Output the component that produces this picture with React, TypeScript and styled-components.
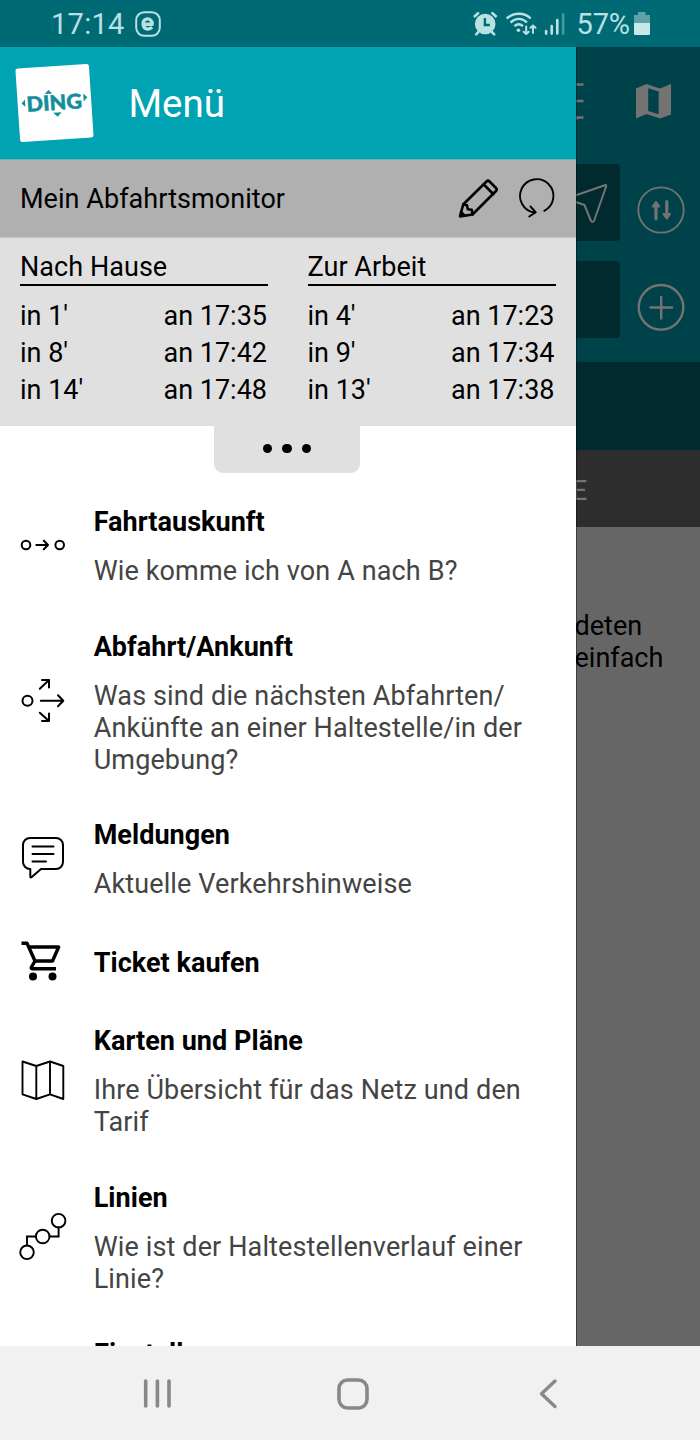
import React from "react";
import styled, { createGlobalStyle } from "styled-components";

const GlobalStyle = createGlobalStyle`
  * { box-sizing: border-box; }
  html, body { margin: 0; padding: 0; }
  body { font-family: Roboto, "Liberation Sans", sans-serif; color: #000; }
  svg { display: block; flex: none; overflow: visible; }
`;

const Phone = styled.div`
  width: 700px;
  height: 1440px;
  display: flex;
  flex-direction: column;
  overflow: hidden;
`;

const StatusBar = styled.header`
  height: 47px;
  flex: none;
  display: flex;
  align-items: center;
  padding: 0 50px 0 51px;
  background: #006a74;
  color: #b9e0e3;
`;

const StatusText = styled.span<{ $gap: number; $spacing?: number }>`
  font-size: 29px;
  line-height: 34px;
  padding-top: 1px;
  letter-spacing: ${(p) => p.$spacing ?? 0}px;
  margin-right: ${(p) => p.$gap}px;
`;

const StatusIcons = styled.div`
  display: flex;
  align-items: center;
  margin-left: auto;
`;

const IconGroup = styled.div`
  display: flex;
  align-items: center;
  gap: 7px;
  margin-right: 10px;
`;

const Stage = styled.main`
  position: relative;
  flex: 1;
  min-height: 0;
  background: #666;
`;

const Backdrop = styled.div`
  display: flex;
  flex-direction: column;
`;

const SearchArea = styled.section`
  height: 315px;
  padding: 0 15px;
  background: #004249;
`;

const AppBar = styled.div`
  height: 109px;
  display: flex;
  align-items: center;
  justify-content: flex-end;
  gap: 51px;
  padding-right: 13px;
`;

const SearchRow = styled.div`
  display: flex;
  align-items: center;
  gap: 17px;
  height: 97px;
  padding: 8px 0 12px;
`;

const SearchField = styled.div`
  flex: 1;
  height: 77px;
  display: flex;
  align-items: center;
  justify-content: flex-end;
  padding-right: 12px;
  border-radius: 4px;
  background: #002a2e;
`;

const RowAction = styled.div`
  padding-top: 15px;
`;

const OptionsBar = styled.div`
  height: 88px;
  background: #002a2e;
`;

const TabBar = styled.div`
  height: 77px;
  display: flex;
  align-items: center;
  padding: 4px 0 0 572px;
  background: #2d2d2d;
  color: #737373;
  font-size: 27px;
`;

const BackdropText = styled.p`
  margin: 82.5px 0 0 574.5px;
  font-size: 27px;
  line-height: 32px;
  white-space: pre-line;
`;

const Drawer = styled.aside`
  position: absolute;
  top: 0;
  left: 0;
  bottom: 0;
  width: 576px;
  overflow: hidden;
  background: #fff;
  box-shadow: 1px 0 0 rgba(0, 0, 0, 0.4);
`;

const DrawerHeader = styled.div`
  height: 113px;
  display: flex;
  align-items: center;
  padding-left: 14px;
  gap: 33.5px;
  background: #00a3b1;
  border-bottom: 1px solid #6cb0b5;
`;

const DrawerTitle = styled.h1`
  margin: 0;
  padding-top: 2px;
  font-size: 38.5px;
  font-weight: 400;
  line-height: 46px;
  color: #fff;
`;

const MonitorBar = styled.div`
  height: 78px;
  display: flex;
  align-items: center;
  padding: 0 21px 1px 20px;
  background: #b0b0b0;
  border-bottom: 1px solid #c4c4c4;
`;

const MonitorTitle = styled.h2`
  margin: 0 auto 0 0;
  padding-top: 2px;
  font-size: 27px;
  font-weight: 400;
  letter-spacing: 0.05px;
`;

const MonitorActions = styled.div`
  display: flex;
  gap: 19px;
`;

const Board = styled.div`
  height: 188px;
  display: grid;
  grid-template-columns: 248px 248px;
  column-gap: 39.5px;
  padding: 13px 20px 0;
  background: #e0e0e0;
`;

const BoardTitle = styled.h3`
  margin: 0 0 12px;
  height: 35px;
  font-size: 27px;
  line-height: 33px;
  font-weight: 400;
  letter-spacing: 0.05px;
  border-bottom: 2px solid #000;
`;

const Departure = styled.div`
  display: flex;
  justify-content: space-between;
  padding-right: 1px;
  font-size: 27px;
  line-height: 37px;
`;

const MoreTab = styled.button`
  display: flex;
  align-items: center;
  justify-content: center;
  gap: 10px;
  width: 146px;
  height: 46.5px;
  margin: 0 0 12px 214px;
  padding: 0 0 2px;
  border: 0;
  border-radius: 0 0 9px 9px;
  background: #e0e0e0;
`;

const Dot = styled.span`
  width: 9.5px;
  height: 9.5px;
  border-radius: 50%;
  background: #000;
`;

const MenuItem = styled.div<{ $single?: boolean }>`
  display: flex;
  align-items: center;
  gap: 25.7px;
  height: ${(p) => (p.$single ? "81.5px" : "auto")};
  padding: 21.75px 30px 21.75px 20px;
`;

const IconCell = styled.div`
  width: 48px;
  flex: none;
  margin-bottom: 3px;
`;

const ItemTitle = styled.h4`
  margin: 0;
  font-size: 27px;
  line-height: 32px;
  font-weight: 700;
  letter-spacing: 0.04px;
  white-space: nowrap;
`;

const ItemText = styled.p`
  margin: 17px 0 0;
  font-size: 27px;
  line-height: 32px;
  letter-spacing: 0.13px;
  color: #444;
  white-space: pre-line;
`;

const NavBar = styled.nav`
  height: 94px;
  flex: none;
  display: grid;
  grid-template-columns: 195px 202px auto;
  align-items: center;
  padding: 2px 0 0 142px;
  background: #f1f1f1;
`;

type IconProps = {
  box: string;
  w: number;
  h: number;
  color?: string;
  stroke?: number;
  children: React.ReactNode;
};

const Icon = ({ box, w, h, color = "#000", stroke = 2, children }: IconProps) => (
  <svg
    width={w}
    height={h}
    viewBox={box}
    fill="none"
    stroke={color}
    strokeWidth={stroke}
    strokeLinecap="round"
    strokeLinejoin="round"
  >
    {children}
  </svg>
);

const statusColor = "#b9e0e3";

const AppBadge = () => (
  <Icon box="0 0 26 26" w={26} h={26} color={statusColor} stroke={2}>
    <rect x="1.2" y="1.2" width="23.6" height="23.6" rx="8" />
    <path d="M8 13.3H17.2C17.5 6.3 8 6.1 8.1 12.8C8.2 19 14.5 19.1 17 16.2" strokeWidth="3.4" strokeLinecap="butt" />
  </Icon>
);

const AlarmIcon = () => (
  <Icon box="0.6 0 26 25" w={26} h={25} color={statusColor}>
    <circle cx="12.8" cy="13" r="10.3" fill={statusColor} stroke="none" />
    <path d="M1.5 6L6.5 1.5M19.2 1.5L24.2 6" strokeWidth="2.6" strokeLinecap="butt" />
    <path d="M6 21L3.8 23.3M19.5 21L21.8 23.3" strokeWidth="2.6" />
    <path d="M12.5 7V14H17.5" stroke="#006a74" strokeWidth="2.4" strokeLinecap="butt" strokeLinejoin="miter" />
  </Icon>
);

const WifiIcon = () => (
  <Icon box="0.8 0 32 24" w={32} h={24} color={statusColor} stroke={2.4}>
    <path d="M1.5 6.5C8.5 .2 19 .2 25.5 6.5M5.3 10.5C10.5 5.8 16.8 5.8 21.8 10.5M9.2 14.2C12 11.8 15 11.8 17.8 14.2" strokeLinecap="butt" />
    <circle cx="13.2" cy="18.2" r="1.8" fill={statusColor} stroke="none" />
    <path d="M21 14.5V22M18.5 19.7L21 22L23.5 19.7M27.8 21V13.5M25.3 15.8L27.8 13.5L30.3 15.8" strokeWidth="2" />
  </Icon>
);

const SignalIcon = () => (
  <Icon box="0.5 0 21 22" w={21} h={22} color={statusColor} stroke={2.6}>
    <path d="M1.6 18V20.6M7.2 13V20.6M12.8 7V20.6" />
    <path d="M18.6 1.5V20.6" opacity=".4" />
  </Icon>
);

const BatteryIcon = () => (
  <Icon box="0 0 16 23" w={16} h={23} color="none">
    <path d="M4 0H11.5V3H16V11H0V3H4Z" fill="#5fa3a9" />
    <path d="M0 11H16V21.5Q16 23 14.5 23H1.5Q0 23 0 21.5Z" fill="#c9e8ea" />
  </Icon>
);

const Logo = () => (
  <svg width="81" height="80" viewBox="14 63 81 80">
    <g transform="rotate(-3.8 54.5 103)">
      <rect x="17.7" y="66.2" width="73.6" height="73.6" rx="2.5" fill="#fff" />
      <text
        x="26.5"
        y="110"
        fontFamily="Lato, sans-serif"
        fontWeight="900"
        fontSize="20.5"
        textLength="55.5"
        lengthAdjust="spacingAndGlyphs"
        fill="#128f9b"
        stroke="#128f9b"
        strokeWidth="0.5"
      >
        DING
      </text>
      <path
        d="M45.4 93.4L49.2 89.6L53 93.4ZM52.5 112.6H61L56.8 117ZM25.2 97.5V105L21.6 101.2ZM83.8 95.5V103.5L87.6 99.5Z"
        fill="#128f9b"
      />
    </g>
  </svg>
);

const PencilIcon = () => (
  <Icon box="458 178 40 40" w={40} h={40} stroke={2.6}>
    <path d="M460 216.4L463.2 204.5L486.5 181.5Q488 180 489.5 181.5L496 188Q497.5 189.5 496 191L472.5 214.5Z" />
    <path d="M483.8 184.5L493.2 194M463.2 204.5L467 205.2L467.8 209.2L471.8 209.8L472.5 214.5M461 212L464.5 215.5" />
  </Icon>
);

const ReloadIcon = () => (
  <Icon box="518 178 38 40" w={38} h={40} stroke={1.9}>
    <path d="M545.3 210.8A16.7 16.7 0 1 0 535.8 212.5" />
    <path d="M531.5 206.5L536.8 212.3L530.2 216.5" />
  </Icon>
);

const TripIcon = () => (
  <Icon box="20 533 48 24" w={48} h={24}>
    <circle cx="26" cy="545" r="4.3" />
    <circle cx="59.7" cy="545" r="4.3" />
    <path d="M36.3 545H48M43.8 540.8L48 545L43.8 549.2" />
  </Icon>
);

const DepartureIcon = () => (
  <Icon box="20 678 48 48" w={48} h={48}>
    <circle cx="27.5" cy="700.8" r="5" />
    <path d="M40.8 700.8H63.2M58 695.3L63.3 700.8L58 706.3" />
    <path d="M39.8 688.7L49 680M42 680H49V687.5M39.8 712.7L49 721M42 721H49V713.5" />
  </Icon>
);

const MessageIcon = () => (
  <Icon box="20 834 48 48" w={48} h={48}>
    <path d="M30 838H56A7 7 0 0 1 63 845V862A7 7 0 0 1 56 869H41L31.5 877.2Q30.3 878 30.3 876.5V869A7 7 0 0 1 23 862V845A7 7 0 0 1 30 838Z" />
    <path d="M32.5 846.5H53.5M32.5 854H53.5M32.5 861.5H46" />
  </Icon>
);

const CartIcon = () => (
  <Icon box="20 937.5 48 48" w={48} h={48} stroke={3.4}>
    <path d="M21.5 943.8H27L35 961.5H52.5L58.7 947.5H29" strokeLinecap="butt" />
    <path d="M35 961.5L31.2 968Q31 969.3 32.5 969.3H56" strokeLinecap="butt" />
    <circle cx="33" cy="977" r="4" fill="#000" stroke="none" />
    <circle cx="52.5" cy="977" r="4" fill="#000" stroke="none" />
  </Icon>
);

const MapIcon = () => (
  <Icon box="20 1056 48 48" w={48} h={48} stroke={1.9}>
    <path d="M22.5 1061.5L36.3 1066L50 1061.5L63.3 1066V1099L50 1094.3L36.3 1099L22.5 1094.3ZM36.3 1066V1099M50 1061.5V1094.3" />
  </Icon>
);

const LinesIcon = () => (
  <Icon box="20 1213 48 48" w={48} h={48} stroke={1.9}>
    <circle cx="27" cy="1252.3" r="6.8" />
    <circle cx="42.7" cy="1236.5" r="6.8" />
    <circle cx="58.6" cy="1220.7" r="6.8" />
    <path d="M27 1245.3V1236.5H36M49.5 1236.5H58.6V1227.5" strokeLinejoin="miter" />
  </Icon>
);

const ListIcon = () => (
  <Icon box="556 80 28 44" w={28} h={44} color="#737373">
    <path d="M560 84.5H583.5M560 101H583.5M560 117.5H583.5M572 114L577.5 118L572 121" strokeLinecap="butt" strokeWidth="2.4" />
  </Icon>
);

const FoldedMapIcon = () => (
  <Icon box="635 83 37 37" w={37} h={37} color="none">
    <path d="M636 88.5L646.5 84L660 88.5L671 84V114.5L660 118.5L646.5 114L636 118.5Z" fill="#737373" />
    <path d="M648.2 88.3L658.7 91.5V114.3L648.2 111Z" fill="#004249" />
  </Icon>
);

const LocateIcon = () => (
  <Icon box="568 181 40 42" w={40} h={42} color="#737373">
    <path d="M605.5 184L569.5 196.5Q568.8 198 570 199L584.5 204L591 220Q592.5 222 594 220L606.3 185Q606.3 183.8 605.5 184Z" />
  </Icon>
);

const SwapIcon = () => (
  <Icon box="637 186 48 48" w={48} h={48} color="#737373" stroke={1.8}>
    <circle cx="661" cy="210" r="22.7" />
    <path d="M656 219V206M666.8 201.5V214.5" strokeWidth="3.2" />
    <path d="M652.7 206.5L656 201.8L659.3 206.5ZM663.5 214L666.8 218.7L670.1 214Z" fill="#737373" />
  </Icon>
);

const AddIcon = () => (
  <Icon box="637 283 48 48" w={48} h={48} color="#737373" stroke={2.4}>
    <circle cx="661" cy="307.3" r="22.3" />
    <path d="M650.5 307.5H672M661.2 297V318.5" />
  </Icon>
);

const navColor = "#888";

const boards = [
  { title: "Nach Hause", rows: [["in 1'", "an 17:35"], ["in 8'", "an 17:42"], ["in 14'", "an 17:48"]] },
  { title: "Zur Arbeit", rows: [["in 4'", "an 17:23"], ["in 9'", "an 17:34"], ["in 13'", "an 17:38"]] },
];

const menu: { title: string; text?: string; icon?: React.ReactNode }[] = [
  { title: "Fahrtauskunft", text: "Wie komme ich von A nach B?", icon: <TripIcon /> },
  {
    title: "Abfahrt/Ankunft",
    text: "Was sind die nächsten Abfahrten/\nAnkünfte an einer Haltestelle/in der\nUmgebung?",
    icon: <DepartureIcon />,
  },
  { title: "Meldungen", text: "Aktuelle Verkehrshinweise", icon: <MessageIcon /> },
  { title: "Ticket kaufen", icon: <CartIcon /> },
  { title: "Karten und Pläne", text: "Ihre Übersicht für das Netz und den\nTarif", icon: <MapIcon /> },
  { title: "Linien", text: "Wie ist der Haltestellenverlauf einer\nLinie?", icon: <LinesIcon /> },
  { title: "Einstellungen" },
];

export default function App() {
  return (
    <Phone>
      <GlobalStyle />
      <StatusBar>
        <StatusText $gap={10} $spacing={0.3}>17:14</StatusText>
        <AppBadge />
        <StatusIcons>
          <IconGroup>
            <AlarmIcon />
            <WifiIcon />
            <SignalIcon />
          </IconGroup>
          <StatusText $gap={4} $spacing={-0.1}>57%</StatusText>
          <BatteryIcon />
        </StatusIcons>
      </StatusBar>

      <Stage>
        <Backdrop>
          <SearchArea>
            <AppBar>
              <ListIcon />
              <FoldedMapIcon />
            </AppBar>
            <SearchRow>
              <SearchField>
                <LocateIcon />
              </SearchField>
              <RowAction>
                <SwapIcon />
              </RowAction>
            </SearchRow>
            <SearchRow>
              <SearchField />
              <RowAction>
                <AddIcon />
              </RowAction>
            </SearchRow>
          </SearchArea>
          <OptionsBar />
          <TabBar>E</TabBar>
          <BackdropText>{"deten\neinfach"}</BackdropText>
        </Backdrop>

        <Drawer>
          <DrawerHeader>
            <Logo />
            <DrawerTitle>Menü</DrawerTitle>
          </DrawerHeader>
          <MonitorBar>
            <MonitorTitle>Mein Abfahrtsmonitor</MonitorTitle>
            <MonitorActions>
              <PencilIcon />
              <ReloadIcon />
            </MonitorActions>
          </MonitorBar>
          <Board>
            {boards.map((board) => (
              <section key={board.title}>
                <BoardTitle>{board.title}</BoardTitle>
                {board.rows.map(([left, right]) => (
                  <Departure key={left}>
                    <span>{left}</span>
                    <span>{right}</span>
                  </Departure>
                ))}
              </section>
            ))}
          </Board>
          <MoreTab aria-label="Mehr">
            <Dot />
            <Dot />
            <Dot />
          </MoreTab>
          {menu.map((item) => (
            <MenuItem key={item.title} $single={!item.text && !!item.icon}>
              <IconCell>{item.icon}</IconCell>
              <div>
                <ItemTitle>{item.title}</ItemTitle>
                {item.text && <ItemText>{item.text}</ItemText>}
              </div>
            </MenuItem>
          ))}
        </Drawer>
      </Stage>

      <NavBar>
        <Icon box="142 1378 30 32" w={30} h={32} color={navColor} stroke={3.6}>
          <path d="M145.7 1381V1406M157.4 1381V1406M169 1381V1406" />
        </Icon>
        <Icon box="337 1378 32 32" w={32} h={32} color={navColor} stroke={3.6}>
          <rect x="339" y="1380" width="28" height="28" rx="8.5" />
        </Icon>
        <Icon box="539 1378 20 32" w={20} h={32} color={navColor} stroke={3.4}>
          <path d="M555 1381L541.5 1393.7L555 1406.5" />
        </Icon>
      </NavBar>
    </Phone>
  );
}
